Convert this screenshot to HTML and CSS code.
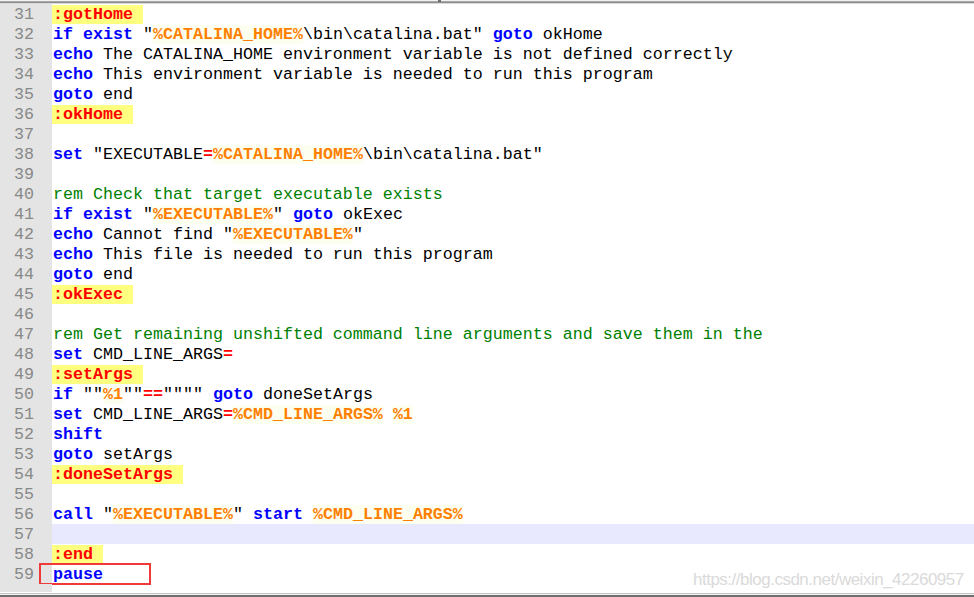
FILE: index.html
```html
<!DOCTYPE html>
<html lang="en">

<head>
  <meta charset="UTF-8">
  <title>catalina.bat</title>
  <link rel="stylesheet" href="styles.css">
</head>

<body>
  <div class="editor">
    <div class="edge-top"><span class="tick"></span></div>

    <div class="line"><span class="num">31</span><span class="text"><span class="label">:gotHome</span></span></div>
    <div class="line"><span class="num">32</span><span class="text"><span class="kw">if</span> <span class="kw">exist</span> "<span class="var">%CATALINA_HOME%</span>\bin\catalina.bat" <span class="kw">goto</span> okHome</span></div>
    <div class="line"><span class="num">33</span><span class="text"><span class="kw">echo</span> The CATALINA_HOME environment variable is not defined correctly</span></div>
    <div class="line"><span class="num">34</span><span class="text"><span class="kw">echo</span> This environment variable is needed to run this program</span></div>
    <div class="line"><span class="num">35</span><span class="text"><span class="kw">goto</span> end</span></div>
    <div class="line"><span class="num">36</span><span class="text"><span class="label">:okHome</span></span></div>
    <div class="line"><span class="num">37</span><span class="text"></span></div>
    <div class="line"><span class="num">38</span><span class="text"><span class="kw">set</span> "EXECUTABLE<span class="op">=</span><span class="var">%CATALINA_HOME%</span>\bin\catalina.bat"</span></div>
    <div class="line"><span class="num">39</span><span class="text"></span></div>
    <div class="line"><span class="num">40</span><span class="text"><span class="rem">rem Check that target executable exists</span></span></div>
    <div class="line"><span class="num">41</span><span class="text"><span class="kw">if</span> <span class="kw">exist</span> "<span class="var">%EXECUTABLE%</span>" <span class="kw">goto</span> okExec</span></div>
    <div class="line"><span class="num">42</span><span class="text"><span class="kw">echo</span> Cannot find "<span class="var">%EXECUTABLE%</span>"</span></div>
    <div class="line"><span class="num">43</span><span class="text"><span class="kw">echo</span> This file is needed to run this program</span></div>
    <div class="line"><span class="num">44</span><span class="text"><span class="kw">goto</span> end</span></div>
    <div class="line"><span class="num">45</span><span class="text"><span class="label">:okExec</span></span></div>
    <div class="line"><span class="num">46</span><span class="text"></span></div>
    <div class="line"><span class="num">47</span><span class="text"><span class="rem">rem Get remaining unshifted command line arguments and save them in the</span></span></div>
    <div class="line"><span class="num">48</span><span class="text"><span class="kw">set</span> CMD_LINE_ARGS<span class="op">=</span></span></div>
    <div class="line"><span class="num">49</span><span class="text"><span class="label">:setArgs</span></span></div>
    <div class="line"><span class="num">50</span><span class="text"><span class="kw">if</span> ""<span class="var">%1</span>""<span class="op">==</span>"""" <span class="kw">goto</span> doneSetArgs</span></div>
    <div class="line"><span class="num">51</span><span class="text"><span class="kw">set</span> CMD_LINE_ARGS<span class="op">=</span><span class="var">%CMD_LINE_ARGS%</span> <span class="var">%1</span></span></div>
    <div class="line"><span class="num">52</span><span class="text"><span class="kw">shift</span></span></div>
    <div class="line"><span class="num">53</span><span class="text"><span class="kw">goto</span> setArgs</span></div>
    <div class="line"><span class="num">54</span><span class="text"><span class="label">:doneSetArgs</span></span></div>
    <div class="line"><span class="num">55</span><span class="text"></span></div>
    <div class="line"><span class="num">56</span><span class="text"><span class="kw">call</span> "<span class="var">%EXECUTABLE%</span>" <span class="kw">start</span> <span class="var">%CMD_LINE_ARGS%</span></span></div>
    <div class="line"><span class="num">57</span><span class="text current"></span></div>
    <div class="line"><span class="num">58</span><span class="text"><span class="label">:end</span></span></div>
    <div class="line"><span class="num">59</span><span class="text"><span class="kw">pause</span></span><span class="mark-box"></span></div>
    <div class="line filler"><span class="num"></span><span class="text"></span></div>

    <div class="edge-bottom"></div>
    <div class="watermark">https://blog.csdn.net/weixin_42260957</div>
  </div>
</body>

</html>
```

FILE: styles.css
```css
body {
  margin: 0;
  background: #ffffff;
}

.editor {
  position: relative;
  width: 974px;
  height: 597px;
  overflow: hidden;
  font-family: "Liberation Mono", "Courier New", monospace;
  font-size: 16.67px;
}

.edge-top {
  position: relative;
  height: 4px;
  background: linear-gradient(#f2f2f2 0 1px, #a8a8a8 1px 2px, #8e8e8e 2px 3px, #dadada 3px 4px);
}

.tick {
  position: absolute;
  left: 438px;
  top: 0;
  width: 3px;
  height: 2px;
  background: #707070;
}

.line {
  position: relative;
  display: flex;
  height: 20px;
  line-height: 20px;
}

.line.filler {
  height: 8px;
}

.num {
  width: 34px;
  padding-right: 18px;
  padding-top: 1px;
  flex-shrink: 0;
  text-align: right;
  color: #888888;
  background: #e4e4e4;
}

.text {
  flex: 1;
  padding-top: 1px;
  padding-left: 1px;
  white-space: pre;
  color: #000000;
}

.text.current {
  background: #e8e8ff;
}

.kw {
  color: #0000ff;
  font-weight: bold;
}

.var {
  color: #ff8000;
  font-weight: bold;
  background: #fcfff0;
}

.op {
  color: #ff0000;
  font-weight: bold;
}

.label {
  color: #ff0000;
  font-weight: bold;
  background: #ffff80;
  margin-left: -1px;
  padding-left: 1px;
  padding-right: 1ch;
}

.rem {
  color: #008000;
}

.mark-box {
  position: absolute;
  left: 39px;
  top: -1px;
  width: 108px;
  height: 18px;
  border: 2px solid #f03a3a;
}

.edge-bottom {
  height: 5px;
  background: linear-gradient(#ffffff 0 1px, #c4c4c4 1px 2px, #f4f4f4 2px 3px, #6e6e6e 3px 5px);
}

.watermark {
  position: absolute;
  left: 693px;
  top: 570px;
  font-family: "Liberation Sans", Arial, sans-serif;
  font-size: 17px;
  letter-spacing: -0.5px;
  color: #dadada;
  white-space: nowrap;
}
```
